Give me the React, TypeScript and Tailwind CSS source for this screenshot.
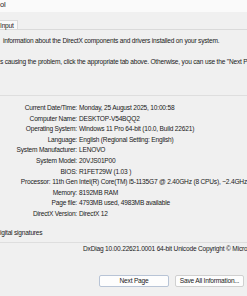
const rows: [string, string][] = [
  ["Current Date/Time:", "Monday, 25 August 2025, 10:00:58"],
  ["Computer Name:", "DESKTOP-V54BQQ2"],
  ["Operating System:", "Windows 11 Pro 64-bit (10.0, Build 22621)"],
  ["Language:", "English (Regional Setting: English)"],
  ["System Manufacturer:", "LENOVO"],
  ["System Model:", "20VJS01P00"],
  ["BIOS:", "R1FET29W (1.03 )"],
  ["Processor:", "11th Gen Intel(R) Core(TM) i5-1135G7 @ 2.40GHz (8 CPUs), ~2.4GHz"],
  ["Memory:", "8192MB RAM"],
  ["Page file:", "4793MB used, 4983MB available"],
  ["DirectX Version:", "DirectX 12"],
];

export default function App() {
  return (
    <div
      className="w-[247px] h-[296px] overflow-hidden bg-[#f0f0f0] text-[#1a1a1a] text-[6.6px] tracking-[-0.2px] leading-[10px] whitespace-nowrap"
      style={{ fontFamily: '"Liberation Sans", Arial, sans-serif' }}
    >
      <div className="h-[12px] bg-[#fafafa] pt-[0px] text-[7.5px]">ol</div>
      <div className="h-[8px]" />
      <div className="flex border-b border-[#dadada] h-[10px]">
        <div className="border-t border-r border-[#dadada] bg-[#f9f9f9] pr-[3px] leading-[9px]">Input</div>
      </div>
      <div className="pl-[3px] mt-[6px]">information about the DirectX components and drivers installed on your system.</div>
      <div className="mt-[11px]">s causing the problem, click the appropriate tab above. Otherwise, you can use the "Next Page" button below to</div>
      <div className="h-[29px] border-b border-[#dedede]" />
      <div className="mt-[7px] flex flex-col gap-[0.6px]">
        {rows.map(([label, value]) => (
          <div key={label} className="flex h-[10px]">
            <div className="w-[77px] text-right">{label}</div>
            <div className="pl-[2px]">{value}</div>
          </div>
        ))}
      </div>
      <div className="mt-[9px]">igital signatures</div>
      <div className="mt-[4px] border-b border-[#dedede]" />
      <div className="mt-[1px] pl-[83px]">DxDiag 10.00.22621.0001 64-bit Unicode  Copyright © Microsoft. All rights reserved.</div>
      <div className="mt-[21px] flex pl-[99px] gap-[6px]">
        <button className="w-[70px] h-[12px] bg-[#fdfdfd] border border-[#b8c4d6] rounded-[2px] leading-[10px]">Next Page</button>
        <button className="w-[69px] h-[12px] bg-[#fdfdfd] border border-[#d0d0d0] rounded-[2px] leading-[10px]">Save All Information...</button>
      </div>
    </div>
  );
}
